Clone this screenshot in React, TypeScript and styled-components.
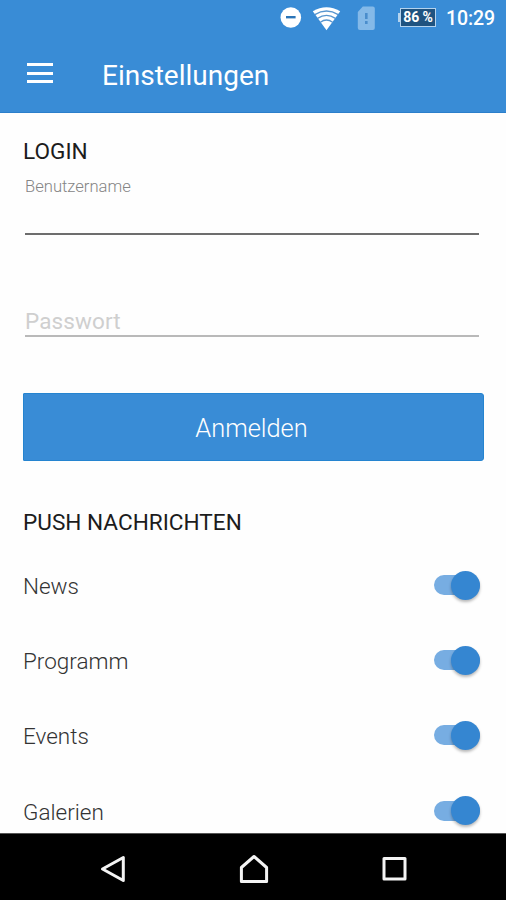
import React, { useState } from "react";
import styled, { createGlobalStyle } from "styled-components";

const BLUE = "#398cd6";

const GlobalStyle = createGlobalStyle`
  * { box-sizing: border-box; }
  body { margin: 0; background: #fff; font-family: Roboto, "Liberation Sans", sans-serif; }
`;

const Screen = styled.div`
  width: 506px;
  height: 900px;
  display: flex;
  flex-direction: column;
  overflow: hidden;
  background: #fefefe;
`;

const StatusBar = styled.div`
  height: 36px;
  flex: none;
  display: flex;
  align-items: center;
  justify-content: flex-end;
  padding-right: 11px;
  background: ${BLUE};
  color: #fff;
`;

const StatusIcons = styled.svg`
  display: block;
  width: 100px;
  height: 36px;
  margin-right: 18px;
`;

const Battery = styled.div`
  width: 36px;
  height: 19px;
  margin-top: -1px;
  padding-bottom: 1px;
  display: flex;
  align-items: center;
  justify-content: center;
  border: 1px solid #b4d3ee;
  background: #1f5380;
  font-size: 14px;
  font-weight: 700;
  letter-spacing: -0.1px;
  white-space: nowrap;
`;

const BatteryTip = styled.div`
  width: 2px;
  height: 9px;
  margin-top: -1px;
  background: #b4d3ee;
`;

const Clock = styled.div`
  width: 49px;
  margin-left: 10px;
  padding-top: 1px;
  font-size: 19.5px;
  font-weight: 500;
  line-height: 36px;
  letter-spacing: -0.1px;
  white-space: nowrap;
`;

const AppBar = styled.header`
  height: 77px;
  flex: none;
  display: flex;
  align-items: center;
  padding: 3px 0 0 27px;
  background: ${BLUE};
  border-bottom: 1px solid #2b7fcb;
  color: #fff;
`;

const MenuButton = styled.button`
  width: 26px;
  height: 20px;
  margin: 0 49px 5px 0;
  padding: 0;
  border: 0;
  background: none;
  display: flex;
  flex-direction: column;
  justify-content: space-between;
`;

const MenuLine = styled.span`
  width: 100%;
  height: 3px;
  background: #fff;
`;

const Title = styled.h1`
  margin: 0;
  font-size: 28px;
  font-weight: 400;
  line-height: 36px;
`;

const Content = styled.main`
  flex: 1;
  min-height: 0;
  overflow: hidden;
  padding: 24px 22px 0 23px;
`;

const Heading = styled.h2`
  margin: 0;
  font-size: 22.6px;
  font-weight: 400;
  line-height: 30px;
  color: #1c1c1c;
`;

const Field = styled.label<{ $active?: boolean }>`
  display: flex;
  flex-direction: column;
  justify-content: ${(p) => (p.$active ? "space-between" : "flex-end")};
  height: ${(p) => (p.$active ? 68 : 102)}px;
  margin: 0 5px 0 2px;
  padding: ${(p) => (p.$active ? "10px 0 0" : "0 0 1px")};
  border-bottom: 2px solid ${(p) => (p.$active ? "#6d6d6d" : "#b9b9b9")};
`;

const FieldLabel = styled.span<{ $small?: boolean }>`
  font-size: ${(p) => (p.$small ? 16.6 : 22.5)}px;
  font-weight: ${(p) => (p.$small ? 300 : 400)};
  line-height: ${(p) => (p.$small ? 20 : 26)}px;
  letter-spacing: ${(p) => (p.$small ? 0 : 0.1)}px;
  color: ${(p) => (p.$small ? "#858585" : "#cfcfcf")};
`;

const LoginButton = styled.button`
  display: block;
  width: 461px;
  height: 68px;
  margin: 56px 0 47px;
  padding: 1px 26px 0 22px;
  border: 1px solid #2584d0;
  border-radius: 1px 3px 3px 1px;
  background: ${BLUE};
  color: #fff;
  font-family: inherit;
  font-size: 25.4px;
  font-weight: 300;
`;

const Row = styled.div`
  display: flex;
  align-items: center;
  justify-content: space-between;
  height: 75.2px;
  padding-right: 4px;
`;

const RowLabel = styled.span`
  padding-top: 2px;
  font-size: 22.5px;
  font-weight: 300;
  line-height: 30px;
  color: #333;
`;

const Rows = styled.div`
  padding-top: 9.5px;
`;

const Track = styled.button<{ $on: boolean }>`
  width: 46px;
  height: 20px;
  padding: 0;
  border: 0;
  border-radius: 10px;
  display: flex;
  align-items: center;
  justify-content: ${(p) => (p.$on ? "flex-end" : "flex-start")};
  background: ${(p) => (p.$on ? "#77ade2" : "#bbb")};
`;

const Thumb = styled.span<{ $on: boolean }>`
  width: 29px;
  height: 29px;
  flex: none;
  border-radius: 50%;
  background: ${(p) => (p.$on ? "#3586d1" : "#eee")};
  box-shadow: 0 2px 3px rgba(0, 0, 0, 0.28);
`;

const NavBar = styled.nav`
  height: 67px;
  flex: none;
  background: #000;
  border-top: 1px solid #555;
`;

const NavIcons = styled.svg`
  display: block;
  width: 506px;
  height: 66px;
`;

function Toggle({ label }: { label: string }) {
  const [on, setOn] = useState(true);
  return (
    <Row>
      <RowLabel>{label}</RowLabel>
      <Track $on={on} role="switch" aria-checked={on} aria-label={label} onClick={() => setOn(!on)}>
        <Thumb $on={on} />
      </Track>
    </Row>
  );
}

export default function App() {
  return (
    <>
      <GlobalStyle />
      <Screen>
        <StatusBar>
          <StatusIcons viewBox="0 0 100 36" aria-hidden="true">
            <circle cx="10.8" cy="17.5" r="10.3" fill="#fff" />
            <path d="M6 17.2h9.6" stroke="#2b75b8" strokeWidth="2.4" />
            <path d="M32.8 11.2Q46.5 3.4 60.2 11.2L46.5 30.2Z" fill="#fff" />
            <g fill="none" stroke="#5795cf" strokeWidth="1.3">
              <path d="M34.8 14.6Q46.5 7.4 58.2 14.6" />
              <path d="M37.6 18.4Q46.5 12.3 55.4 18.4" />
              <path d="M40.4 22.2Q46.5 17.8 52.6 22.2" />
            </g>
            <path d="M82.8 6.5h10q2 0 2 2v19.5q0 2-2 2h-13q-2 0-2-2V12Z" fill="#84b9e8" />
            <path d="M86.3 13v6M86.3 21v3" stroke="#4a8dcc" strokeWidth="2.6" />
          </StatusIcons>
          <BatteryTip />
          <Battery>86 %</Battery>
          <Clock>10:29</Clock>
        </StatusBar>
        <AppBar>
          <MenuButton aria-label="Menü">
            <MenuLine />
            <MenuLine />
            <MenuLine />
          </MenuButton>
          <Title>Einstellungen</Title>
        </AppBar>
        <Content>
          <Heading>LOGIN</Heading>
          <Field $active>
            <FieldLabel $small>Benutzername</FieldLabel>
          </Field>
          <Field>
            <FieldLabel>Passwort</FieldLabel>
          </Field>
          <LoginButton>Anmelden</LoginButton>
          <Heading>PUSH NACHRICHTEN</Heading>
          <Rows>
            <Toggle label="News" />
            <Toggle label="Programm" />
            <Toggle label="Events" />
            <Toggle label="Galerien" />
          </Rows>
        </Content>
        <NavBar>
          <NavIcons viewBox="0 0 506 66" fill="none" stroke="#f4f4f4" strokeWidth="3" strokeLinejoin="round">
            <path d="M102.5 35L123.3 23.5V46.5Z" />
            <path d="M254 22.5L241.4 33.5V47.5H266.6V33.5Z" />
            <path d="M384 24.5H405V45H384Z" />
          </NavIcons>
        </NavBar>
      </Screen>
    </>
  );
}
